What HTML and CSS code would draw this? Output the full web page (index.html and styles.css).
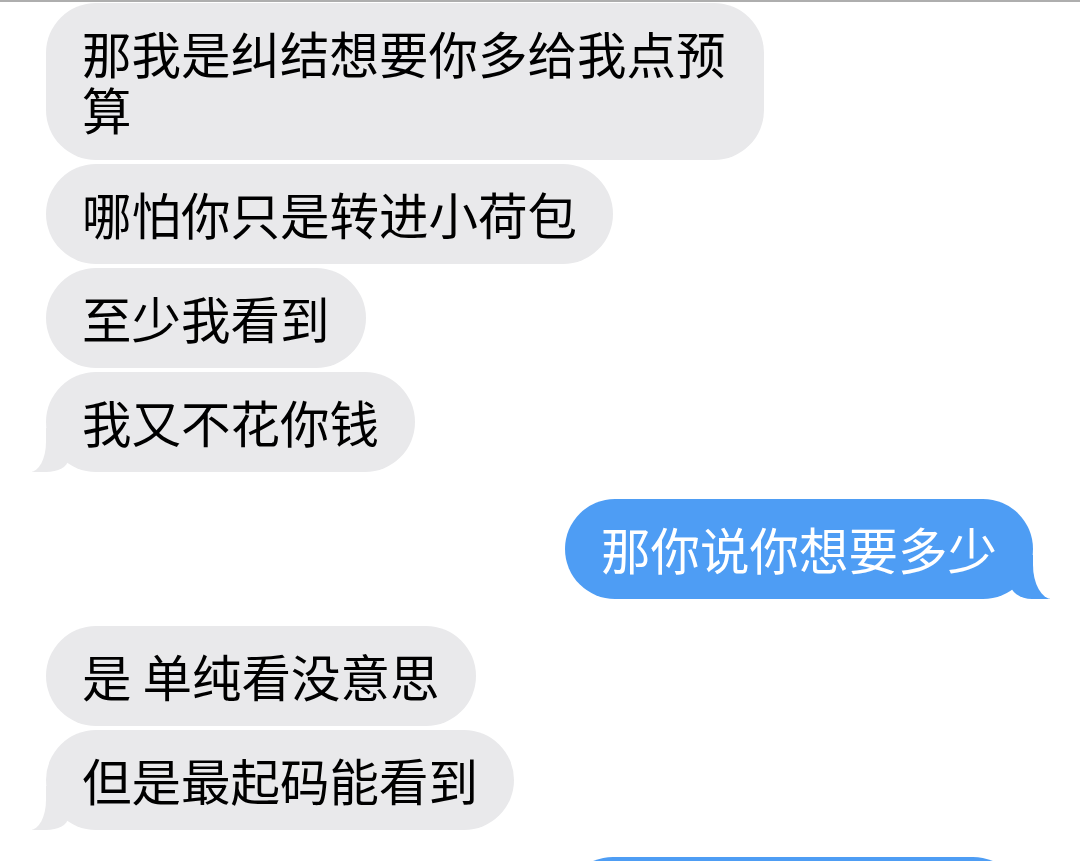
FILE: index.html
```html
<!DOCTYPE html>
<html lang="zh-CN">
<head>
  <meta charset="UTF-8" />
  <meta name="viewport" content="width=device-width, initial-scale=1.0" />
  <title>聊天记录</title>
  <link rel="stylesheet" href="styles.css">
</head>
<body>
  <div class="topline"></div>

  <div class="thread">
    <div class="group">
      <div class="bubble in first">那我是纠结想要你多给我点预算</div>
      <div class="bubble in">哪怕你只是转进小荷包</div>
      <div class="bubble in">至少我看到</div>
      <div class="bubble in tail">我又不花你钱</div>
    </div>

    <div class="group">
      <div class="bubble out tail">那你说你想要多少</div>
    </div>

    <div class="group">
      <div class="bubble in">是 单纯看没意思</div>
      <div class="bubble in tail">但是最起码能看到</div>
    </div>

    <div class="group">
      <div class="bubble out cut"></div>
    </div>
  </div>
</body>
</html>
```

FILE: styles.css
```css
body {
  margin: 0;
  background-color: #fff;
  font-family: "Noto Sans CJK SC", "Noto Sans", sans-serif;
  overflow: hidden;
}
.topline {
  height: 2px;
  background-color: #aeaeae;
}
.thread {
  display: flex;
  flex-direction: column;
  gap: 27px;
  padding: 1px 47px 0 46px;
}
.group {
  display: flex;
  flex-direction: column;
  gap: 4px;
}
.bubble {
  position: relative;
  max-width: 718px;
  box-sizing: border-box;
  padding: 22px 36px;
  border-radius: 50px;
  font-size: 49.5px;
  line-height: 56px;
}
.first {
  padding-bottom: 23px;
}
.in {
  align-self: flex-start;
  background-color: #e9e9eb;
  color: #000;
}
.out {
  align-self: flex-end;
  background-color: #4e9df4;
  color: #fff;
}
.cut {
  width: 460px;
  height: 100px;
  margin-right: 10px;
}

/* tails */
.tail::before,
.tail::after {
  content: "";
  position: absolute;
  bottom: 0;
}
.in.tail::before {
  left: -14px;
  width: 36px;
  height: 44px;
  background-color: #e9e9eb;
  border-bottom-right-radius: 22px 12px;
}
.in.tail::after {
  left: -52px;
  width: 52px;
  height: 44px;
  background-color: #fff;
  border-bottom-right-radius: 16px 30px;
}
.out.tail::before {
  right: -17px;
  width: 40px;
  height: 44px;
  background-color: #4e9df4;
  border-bottom-left-radius: 22px 16px;
}
.out.tail::after {
  right: -56px;
  width: 56px;
  height: 44px;
  background-color: #fff;
  border-bottom-left-radius: 19px 34px;
}
```
